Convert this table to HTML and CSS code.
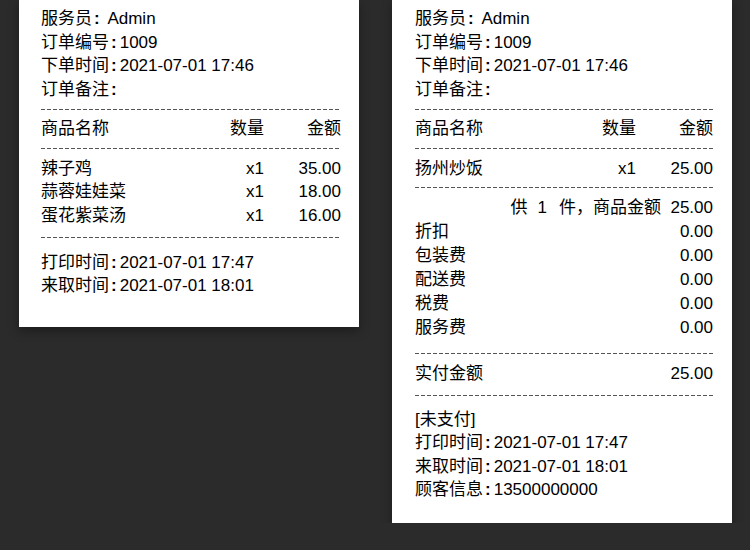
FILE: index.html
```html
<!DOCTYPE html>
<html lang="zh-CN">
<head>
    <meta charset="UTF-8">
    <meta name="viewport" content="width=device-width, initial-scale=1.0">
    <title>小票预览</title>
    <link rel="stylesheet" href="styles.css">
</head>
<body>
    <div class="receipts">
        <!-- 自取小票 -->
        <div class="receipt receipt-short">
            <div class="sec info">
                <p>服务员<span class="colon">:</span> Admin</p>
                <p>订单编号<span class="colon">:</span>1009</p>
                <p>下单时间<span class="colon">:</span>2021-07-01 17:46</p>
                <p>订单备注<span class="colon">:</span></p>
            </div>
            <div class="dash"></div>
            <div class="sec head row">
                <span>商品名称</span>
                <span class="qty">数量</span>
                <span class="amt">金额</span>
            </div>
            <div class="dash"></div>
            <div class="sec items">
                <div class="row"><span>辣子鸡</span><span class="qty">x1</span><span class="amt">35.00</span></div>
                <div class="row"><span>蒜蓉娃娃菜</span><span class="qty">x1</span><span class="amt">18.00</span></div>
                <div class="row"><span>蛋花紫菜汤</span><span class="qty">x1</span><span class="amt">16.00</span></div>
            </div>
            <div class="dash"></div>
            <div class="sec foot">
                <p>打印时间<span class="colon">:</span>2021-07-01 17:47</p>
                <p>来取时间<span class="colon">:</span>2021-07-01 18:01</p>
            </div>
        </div>

        <!-- 完整小票 -->
        <div class="receipt receipt-full">
            <div class="sec info">
                <p>服务员<span class="colon">:</span> Admin</p>
                <p>订单编号<span class="colon">:</span>1009</p>
                <p>下单时间<span class="colon">:</span>2021-07-01 17:46</p>
                <p>订单备注<span class="colon">:</span></p>
            </div>
            <div class="dash"></div>
            <div class="sec head row">
                <span>商品名称</span>
                <span class="qty">数量</span>
                <span class="amt">金额</span>
            </div>
            <div class="dash"></div>
            <div class="sec items items-one">
                <div class="row"><span>扬州炒饭</span><span class="qty">x1</span><span class="amt">25.00</span></div>
            </div>
            <div class="dash"></div>
            <div class="sec summary">
                <p class="subtotal">供<span class="count">1</span>件，商品金额  25.00</p>
                <div class="line"><span>折扣</span><span>0.00</span></div>
                <div class="line"><span>包装费</span><span>0.00</span></div>
                <div class="line"><span>配送费</span><span>0.00</span></div>
                <div class="line"><span>税费</span><span>0.00</span></div>
                <div class="line"><span>服务费</span><span>0.00</span></div>
            </div>
            <div class="dash"></div>
            <div class="sec total">
                <div class="line"><span>实付金额</span><span>25.00</span></div>
            </div>
            <div class="dash"></div>
            <div class="sec foot">
                <p>[未支付]</p>
                <p>打印时间<span class="colon">:</span>2021-07-01 17:47</p>
                <p>来取时间<span class="colon">:</span>2021-07-01 18:01</p>
                <p>顾客信息<span class="colon">:</span>13500000000</p>
            </div>
        </div>
    </div>
</body>
</html>
```

FILE: styles.css
```css
body {
    margin: 0;
    background-color: #2b2b2b;
    font-family: "Liberation Sans", "Noto Sans CJK SC", sans-serif;
    font-size: 17px;
    color: #000;
}
p {
    margin: 0;
}
.receipts {
    display: flex;
    align-items: flex-start;
    gap: 33px;
    padding-left: 19px;
}
.receipt {
    width: 340px;
    box-sizing: border-box;
    background-color: #fff;
    line-height: 23.5px;
    box-shadow: 0 4px 10px rgba(0, 0, 0, 0.35);
}
.receipt-short {
    padding: 7px 18px 0 22px;
}
.receipt-full {
    padding: 7px 19px 0 23px;
}
.colon {
    padding: 0 3px 0 2px;
    font-weight: bold;
}
.dash {
    height: 1px;
    background: repeating-linear-gradient(90deg, #555 0 4px, transparent 4px 6px);
}
.row {
    display: grid;
    grid-template-columns: 1fr auto 77px;
}
.qty,
.amt {
    text-align: right;
}
.line {
    display: flex;
    justify-content: space-between;
}
.info {
    padding-bottom: 8px;
}
.head {
    padding: 6.5px 0 8px;
}
.items {
    padding: 7.5px 0 10px;
}
.items-one {
    padding-bottom: 7px;
}
.summary {
    line-height: 24px;
    padding: 8px 0 12.5px;
}
.subtotal {
    text-align: right;
    white-space: pre;
}
.count {
    padding: 0 12px 0 10px;
}
.total {
    padding: 8px 0 9.5px;
}
.foot {
    padding: 12.5px 0 29.5px;
}
.receipt-full .foot {
    padding: 12px 0 21px;
}
```
